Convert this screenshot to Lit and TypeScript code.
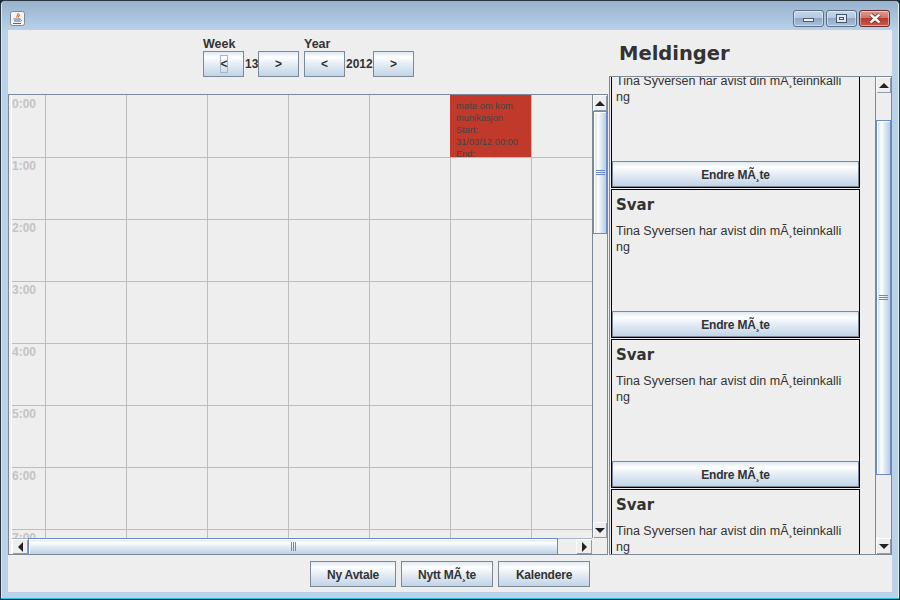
import { LitElement, html, css, svg } from "lit";
import { customElement } from "lit/decorators.js";

const tri = (dir: string) => {
  const pts: Record<string, string> = {
    up: "0,5 5,0 10,5",
    down: "0,0 10,0 5,5",
    left: "5,0 5,10 0,5",
    right: "0,0 0,10 5,5",
  };
  const v = dir === "up" || dir === "down";
  return html`<svg width=${v ? 10 : 5} height=${v ? 5 : 10} viewBox="0 0 ${v ? 10 : 5} ${v ? 5 : 10}">
    <polygon points=${pts[dir]} fill="#222"></polygon></svg>`;
};

const javaIcon = svg`
  <rect x="0.5" y="0.5" width="14" height="14" rx="2" fill="#f4f4f4" stroke="#7d8a98"/>
  <path d="M8 2c1 1.500-2 2.500-1 4.500M9.500 3.500c.5 1-1.500 1.500-1 3" fill="none" stroke="#e2661a" stroke-width="1.200"/>
  <path d="M3.500 8h7M4 10h6M3 12.500h8" stroke="#4f6a8a" stroke-width="1"/>
  <path d="M10.500 8.500q2 .5 0 2" fill="none" stroke="#4f6a8a"/>`;

@customElement("app-root")
export class AppRoot extends LitElement {
  static styles = css`
    :host {
      display: block;
      width: 900px;
      height: 600px;
      overflow: hidden;
      background: #1d2a33;
      font-family: "Liberation Sans", Arial, sans-serif;
      color: #333;
    }
    * { box-sizing: border-box; }
    .window {
      width: 900px;
      height: 600px;
      display: flex;
      flex-direction: column;
      border: 1px solid #2b3640;
      border-bottom-color: #12323f;
      border-radius: 5px 5px 0 0;
      background: linear-gradient(180deg, #98b2ce 0, #b9d2ea 30px, #b9d2ea 100%);
      box-shadow: inset 0 -1px 0 #2ac0d8, inset -1px 0 0 #dff1f8, inset 1px 0 0 #d7e6f3;
      padding: 0 7px 7px 7px;
    }
    .title {
      height: 29px;
      flex: none;
      display: flex;
      align-items: flex-start;
      justify-content: space-between;
      padding: 9px 2px 0 2px;
    }
    .appicon { display: block; width: 15px; height: 15px; margin-top: 1px; }
    .wbtns { display: flex; gap: 2px; }
    .wbtn {
      width: 31px;
      height: 17px;
      display: flex;
      align-items: center;
      justify-content: center;
      border: 1px solid #5c6f85;
      border-radius: 3px;
      background: linear-gradient(180deg, #c5d6e8 0, #b5c9df 45%, #8fa9c6 50%, #a9c1da 100%);
      box-shadow: inset 0 0 0 1px rgba(255, 255, 255, 0.45);
    }
    .wbtn.close {
      border-color: #6e2a2a;
      background: linear-gradient(180deg, #dc9a90 0, #d0766a 45%, #b93a2c 50%, #c9584a 100%);
    }
    .wbtn .min { width: 11px; height: 4px; background: #eef2f6; border: 1px solid #4d5d70; margin-top: 3px; }
    .wbtn .max { width: 11px; height: 9px; background: #dfe7f0; border: 1px solid #44566b; display: flex; align-items: center; justify-content: center; }
    .wbtn .max i { display: block; width: 5px; height: 3px; background: #e9eef4; border: 1px solid #44566b; }

    .content {
      flex: 1;
      min-height: 0;
      background: #eeeeee;
      display: flex;
      flex-direction: column;
    }
    .main { flex: 1; min-height: 0; display: flex; }
    .left { width: 600px; flex: none; display: flex; flex-direction: column; }
    .nav { height: 64px; flex: none; display: flex; padding: 7px 0 0 195px; gap: 5px; }
    .navgroup { display: flex; flex-direction: column; }
    .navgroup label { font-size: 12.500px; font-weight: 700; line-height: 14px; color: #333; }
    .navrow { display: flex; align-items: center; }
    .navrow span.val { font-size: 12px; font-weight: 700; line-height: 26px; color: #333; }
    .week .val { width: 14px; padding-left: 1px; }
    .year .val { width: 28px; padding-left: 1px; }

    button {
      font: 700 12px "Liberation Sans", Arial, sans-serif;
      color: #333;
      border: 1px solid #7a8a99;
      margin: 0;
      padding: 0;
      height: 26px;
      background: linear-gradient(180deg, #dde8f3 0, #ffffff 22%, #e9f0f7 45%, #c2d4e6 100%);
      display: flex;
      align-items: center;
      justify-content: center;
    }
    .nb { width: 41px; }
    .focus { display: block; border: 1px solid #a3b8cc; width: 8px; height: 18px; line-height: 16px; text-align: center; }
    .wide { padding-top: 2px; letter-spacing: -0.2px; }

    .pane {
      flex: 1;
      min-height: 0;
      border: 1px solid #7a8a99;
      padding-left: 2px;
      display: grid;
      grid-template-columns: 1fr 15px;
      grid-template-rows: 1fr 16px;
    }
    .view {
      border-left: 1px solid #fff;
      overflow: hidden;
      min-height: 0;
      min-width: 0;
    }
    .row { display: flex; height: 62px; border-top: 1px solid #bdbdbd; }
    .row:first-child { border-top: none; }
    .time {
      width: 33px;
      flex: none;
      font-size: 12px;
      font-weight: 700;
      color: #c4c4c4;
      padding: 1px 0 0 0;
      line-height: 14px;
    }
    .row:first-child .time { padding-top: 2px; }
    .cell { width: 81px; flex: none; border-left: 1px solid #bdbdbd; }
    .event {
      background: #c0392b;
      border-left: none;
      padding: 5px 0 0 6px;
      font-size: 9.300px;
      line-height: 12px;
      color: #444;
      overflow: hidden;
      height: 62px;
      white-space: nowrap;
    }
    .sb { display: flex; background: #eeeeee; }
    .sb.v { flex-direction: column; border-left: 1px solid #7a8a99; width: 15px; }
    .sb.h { border-left: 1px solid #fff; border-top: 1px solid #a9b6c4; height: 16px; }
    .arrow {
      flex: none;
      display: flex;
      align-items: center;
      justify-content: center;
      background: #eeeeee;
      box-shadow: inset 1px 1px 0 #fff, inset -1px -1px 0 #8f9dab;
    }
    .v .arrow { height: 16px; }
    .h .arrow { width: 16px; }
    .thumb {
      border: 1px solid #6b8ac4;
      display: flex;
      align-items: center;
      justify-content: center;
      box-shadow: inset 1px 1px 0 #fff;
    }
    .v .thumb {
      background: linear-gradient(90deg, #c9d9ea 0, #fff 35%, #e3ecf5 55%, #b9cde3 100%);
      flex-direction: column;
      gap: 1px;
    }
    .h .thumb {
      background: linear-gradient(180deg, #d5e1ee 0, #fff 25%, #e3ecf5 50%, #bfd1e5 100%);
      gap: 1px;
      margin-top: -1px;
      border-bottom: none;
    }
    .v .thumb i { display: block; width: 9px; height: 1px; background: #6b8ac4; }
    .h .thumb i { display: block; width: 1px; height: 9px; background: #6b8ac4; }
    .track { flex: 1; }
    .corner { background: #eee; }

    .right { flex: 1; min-width: 0; display: flex; flex-direction: column; margin-left: 1px; }
    h1 {
      margin: 0;
      height: 46px;
      flex: none;
      padding: 12px 0 0 10px;
      font: 700 19.500px/24px "DejaVu Sans", sans-serif;
      color: #333;
    }
    .mpane {
      flex: 1;
      min-height: 0;
      border: 1px solid #7a8a99;
      display: flex;
      overflow: hidden;
    }
    .list { flex: 1; min-width: 0; padding: 0 0 0 1px; overflow: hidden; }
    .cards { margin-top: -38px; display: flex; flex-direction: column; gap: 1px; width: 249px; }
    .card {
      height: 149px;
      flex: none;
      border: 1px solid #000;
      display: flex;
      flex-direction: column;
    }
    .card h2 {
      margin: 0;
      padding: 6px 0 0 4px;
      font: 700 15px/18px "DejaVu Sans", sans-serif;
      color: #333;
      height: 33px;
      flex: none;
    }
    .card p {
      margin: 0;
      flex: 1;
      padding: 0 0 0 4px;
      font-size: 12.500px;
      line-height: 16px;
      color: #333;
      white-space: nowrap;
    }
    .card button { width: 247px; height: 26px; flex: none; }
    .mpane .sb.v { width: 16px; flex: none; }
    .mpane .track1 { height: 27px; flex: none; }

    .bottom {
      height: 37px;
      flex: none;
      display: flex;
      justify-content: center;
      gap: 5px;
      padding: 6px 0 0 0;
    }
    .bottom button { height: 26px; }
    .b1 { width: 86px; }
    .b2 { width: 92px; }
    .b3 { width: 92px; }
  `;

  render() {
    const hours = ["0:00", "1:00", "2:00", "3:00", "4:00", "5:00", "6:00", "7:00"];
    return html`<div class="window">
      <div class="title">
        <svg class="appicon" viewBox="0 0 15 15">${javaIcon}</svg>
        <div class="wbtns">
          <div class="wbtn"><div class="min"></div></div>
          <div class="wbtn"><div class="max"><i></i></div></div>
          <div class="wbtn close">
            <svg width="14" height="11" viewBox="0 0 14 11">
              <path d="M2.500 1.500L11.500 9.500M11.500 1.500L2.500 9.500" stroke="#5a2a2a" stroke-width="4"></path>
              <path d="M2.500 1.500L11.500 9.500M11.500 1.500L2.500 9.500" stroke="#f4f4f4" stroke-width="2.600"></path>
            </svg>
          </div>
        </div>
      </div>
      <div class="content">
        <div class="main">
          <div class="left">
            <div class="nav">
              <div class="navgroup week">
                <label>Week</label>
                <div class="navrow">
                  <button class="nb"><span class="focus">&lt;</span></button>
                  <span class="val">13</span>
                  <button class="nb">&gt;</button>
                </div>
              </div>
              <div class="navgroup year">
                <label>Year</label>
                <div class="navrow">
                  <button class="nb">&lt;</button>
                  <span class="val">2012</span>
                  <button class="nb">&gt;</button>
                </div>
              </div>
            </div>
            <div class="pane">
              <div class="view">
                ${hours.map(
                  (h, i) => html`<div class="row">
                    <div class="time">${h}</div>
                    ${[0, 1, 2, 3, 4, 5, 6].map((c) =>
                      i === 0 && c === 5
                        ? html`<div class="cell event">møte om kom<br />munikasjon<br />Start:<br />31/03/12 00:00<br />End:</div>`
                        : html`<div class="cell"></div>`
                    )}
                  </div>`
                )}
              </div>
              <div class="sb v">
                <div class="arrow">${tri("up")}</div>
                <div class="thumb" style="height:123px"><i></i><i></i><i></i></div>
                <div class="track"></div>
                <div class="arrow">${tri("down")}</div>
              </div>
              <div class="sb h">
                <div class="arrow">${tri("left")}</div>
                <div class="thumb" style="width:530px"><i></i><i></i><i></i></div>
                <div class="track"></div>
                <div class="arrow">${tri("right")}</div>
              </div>
              <div class="corner"></div>
            </div>
          </div>
          <div class="right">
            <h1>Meldinger</h1>
            <div class="mpane">
              <div class="list">
                <div class="cards">
                  ${[0, 1, 2, 3].map(
                    () => html`<div class="card">
                      <h2>Svar</h2>
                      <p>Tina Syversen har avist din mÃ¸teinnkalli<br />ng</p>
                      <button class="wide">Endre MÃ¸te</button>
                    </div>`
                  )}
                </div>
              </div>
              <div class="sb v">
                <div class="arrow">${tri("up")}</div>
                <div class="track1"></div>
                <div class="thumb" style="height:355px"><i></i><i></i><i></i></div>
                <div class="track"></div>
                <div class="arrow">${tri("down")}</div>
              </div>
            </div>
          </div>
        </div>
        <div class="bottom">
          <button class="b1 wide">Ny Avtale</button>
          <button class="b2 wide">Nytt MÃ¸te</button>
          <button class="b3 wide">Kalendere</button>
        </div>
      </div>
    </div>`;
  }
}
